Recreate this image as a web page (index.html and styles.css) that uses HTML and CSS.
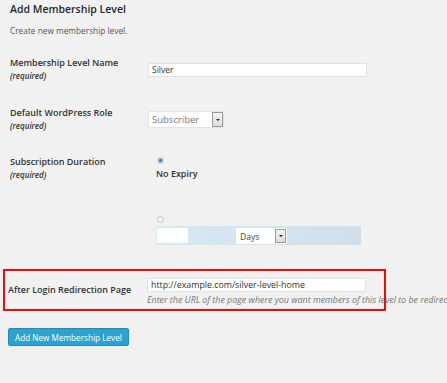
FILE: index.html
```html
<!DOCTYPE html>
<html lang="en">
<head>
    <meta charset="UTF-8">
    <meta name="viewport" content="width=device-width, initial-scale=1.0">
    <title>Add Membership Level</title>
    <link rel="stylesheet" href="styles.css">
</head>
<body>
    <div class="wrap">
        <h2 class="page-title">Add Membership Level</h2>
        <p class="intro">Create new membership level.</p>

        <div class="form-row row-name">
            <div class="form-label">
                <div class="label-text">Membership Level Name</div>
                <div class="required">(required)</div>
            </div>
            <div class="form-field">
                <div class="text-input wide">Silver</div>
            </div>
        </div>

        <div class="form-row row-role">
            <div class="form-label">
                <div class="label-text">Default WordPress Role</div>
                <div class="required">(required)</div>
            </div>
            <div class="form-field">
                <div class="select-box role-select">
                    <span class="select-value">Subscriber</span>
                    <span class="select-arrow"></span>
                </div>
            </div>
        </div>

        <div class="form-row row-duration">
            <div class="form-label">
                <div class="label-text">Subscription Duration</div>
                <div class="required">(required)</div>
            </div>
            <div class="form-field duration-field">
                <span class="radio checked"></span>
                <div class="radio-label">No Expiry</div>
                <span class="radio second"></span>
                <div class="duration-row">
                    <div class="text-input small"></div>
                    <div class="select-box days-select">
                        <span class="select-value dark">Days</span>
                        <span class="select-arrow"></span>
                    </div>
                </div>
            </div>
        </div>

        <div class="form-row row-redirect">
            <div class="form-label">
                <div class="label-text">After Login Redirection Page</div>
            </div>
            <div class="form-field">
                <div class="text-input wide url">http://example.com/silver-level-home</div>
                <p class="description">Enter the URL of the page where you want members of this level to be redirected to after they log in.</p>
            </div>
        </div>

        <button class="button-primary">Add New Membership Level</button>
    </div>
</body>
</html>
```

FILE: styles.css
```css
* {
    margin: 0;
    padding: 0;
    box-sizing: border-box;
}

body {
    font-family: 'Open Sans', sans-serif;
    background: #f1f1f1;
    color: #23282d;
    overflow: hidden;
}

.wrap {
    padding: 1px 10px 0 10px;
}

.page-title {
    font-size: 10.5px;
    font-weight: 600;
    line-height: 16px;
    color: #23282d;
}

.intro {
    margin-top: 8px;
    font-size: 8.3px;
    line-height: 12px;
    color: #555;
}

.form-row {
    display: flex;
    align-items: flex-start;
}

.form-label {
    width: 138px;
    flex: none;
}

.label-text {
    font-size: 9px;
    font-weight: 600;
    line-height: 12px;
    color: #333;
}

.required {
    font-size: 8px;
    font-weight: 600;
    font-style: italic;
    line-height: 11px;
    margin-top: 1px;
    color: #333;
}

.form-field {
    flex: 1;
    min-width: 0;
}

.row-name {
    margin-top: 20px;
}

.row-name .form-field {
    padding-top: 6px;
}

.row-role {
    margin-top: 26px;
}

.row-role .form-field {
    padding-top: 4px;
}

.row-duration {
    margin-top: 25px;
}

.duration-field {
    padding-top: 1px;
    padding-left: 8px;
}

.text-input {
    background: #fff;
    border: 1px solid #e2e2e2;
    height: 14px;
    font-size: 8.5px;
    line-height: 12px;
    padding: 0 3px;
    color: #333;
    white-space: nowrap;
}

.text-input.wide {
    width: 219px;
}

.text-input.url {
    font-size: 8.8px;
}

.text-input.small {
    width: 31px;
    height: 15px;
    border-color: #fff;
}

.select-box {
    display: flex;
    background: #fff;
    border: 1px solid #e4e4e4;
    height: 17px;
}

.role-select {
    width: 76px;
}

.days-select {
    width: 51px;
    height: 16px;
    margin-left: 48px;
    border-color: #fff;
}

.select-value {
    flex: 1;
    font-size: 9.5px;
    line-height: 15px;
    padding-left: 3px;
    color: #777;
}

.select-value.dark {
    font-size: 8.5px;
    color: #444;
}

.select-arrow {
    width: 11px;
    flex: none;
    background: linear-gradient(#f4f4f4, #dcdcdc);
    border: 1px solid #999;
    position: relative;
}

.select-arrow::after {
    content: '';
    position: absolute;
    left: 3px;
    top: 50%;
    margin-top: -1px;
    border-left: 2px solid transparent;
    border-right: 2px solid transparent;
    border-top: 2px solid #222;
}

.radio {
    display: block;
    width: 7px;
    height: 7px;
    border-radius: 50%;
    border: 1px solid #c4c4c4;
    background: #f4f4f4;
    margin-left: 1px;
}

.radio.checked {
    background: radial-gradient(circle, #2f88c4 0, #2f88c4 40%, #dde3e8 60%);
    border-color: #b8c4cc;
}

.radio-label {
    margin-top: 4px;
    font-size: 9px;
    font-weight: 600;
    line-height: 12px;
    color: #333;
}

.radio.second {
    margin-top: 36px;
}

.duration-row {
    display: flex;
    align-items: center;
    margin-top: 3px;
    width: 205px;
    height: 19px;
    padding-left: 1px;
    background: linear-gradient(to right, #d7e9f1, #cfdfec);
}

.row-redirect {
    margin-top: 33px;
    margin-left: -2px;
    position: relative;
}

.row-redirect .form-label {
    width: 139px;
    padding-top: 6px;
}

.row-redirect::after {
    content: '';
    position: absolute;
    left: -5px;
    top: -9px;
    right: 51px;
    bottom: -6px;
    border: 2px solid #f20a0a;
    pointer-events: none;
}

.description {
    margin-top: 2px;
    font-size: 8.9px;
    font-style: italic;
    line-height: 11px;
    color: #777;
    white-space: nowrap;
}

.button-primary {
    margin-top: 23px;
    margin-left: -2px;
    display: block;
    background: #2ea2cc;
    border: 1px solid #1e8cbe;
    border-radius: 2px;
    color: #fff;
    font-family: 'Open Sans', sans-serif;
    font-size: 8.2px;
    line-height: 15px;
    height: 18px;
    padding: 0 6px;
}
```
